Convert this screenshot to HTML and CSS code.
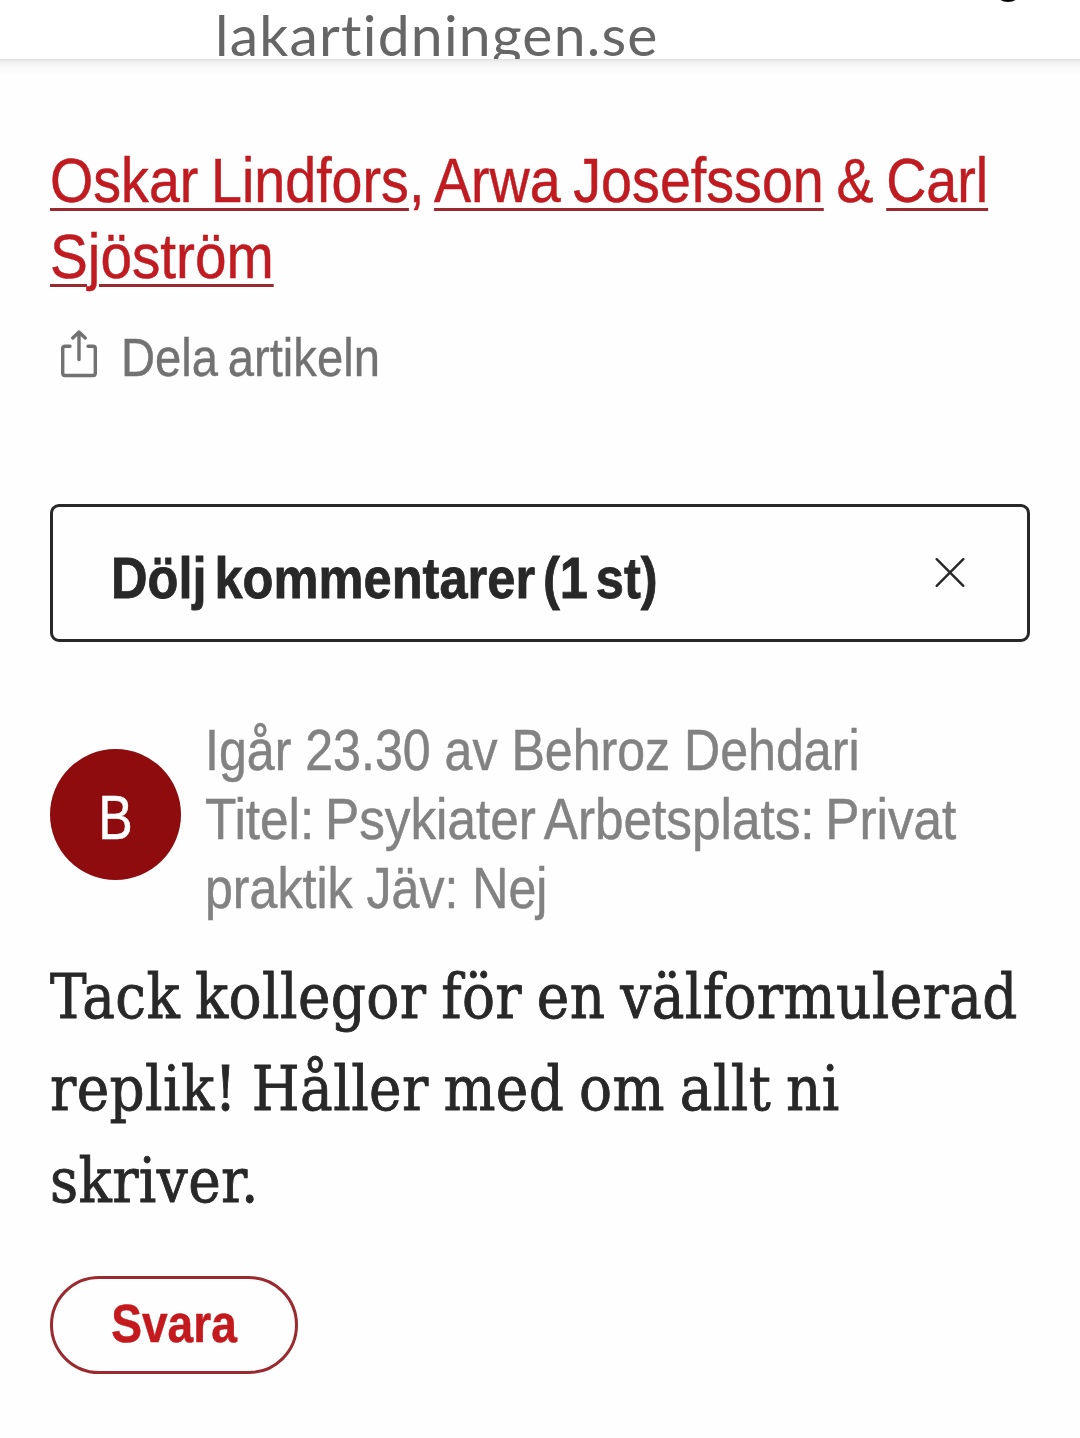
FILE: index.html
```html
<!DOCTYPE html>
<html lang="sv">
<head>
<meta charset="utf-8">
<title>Läkartidningen</title>
<link rel="stylesheet" href="styles.css">
</head>
<body>
<header class="browser-bar">
  <span class="address">lakartidningen.se</span>
  <span class="bar-dot"></span>
</header>
<main class="page">
  <p class="authors">
    <span class="narrow authors-first"><a>Oskar Lindfors</a>, <a>Arwa Josefsson</a> &amp; <a>Carl</a></span>
    <span class="narrow authors-second"><a>Sjöström</a></span>
  </p>
  <div class="share">
    <svg class="share-icon" width="36" height="48" viewBox="0 0 36 48" fill="none" stroke="#727272" stroke-width="3.4" stroke-linecap="round" stroke-linejoin="round">
      <path d="M9 16.2H4Q1.7 16.2 1.7 18.5V43Q1.7 45.5 4 45.5H32Q34.3 45.5 34.3 43V18.5Q34.3 16.2 32 16.2H27M18 29.5V2.2M11.8 8L18 2L24.2 8"/>
    </svg>
    <span class="narrow share-label">Dela artikeln</span>
  </div>
  <button class="toggle">
    <span class="narrow toggle-label">Dölj kommentarer (1 st)</span>
    <svg width="30" height="30" viewBox="0 0 30 30" fill="none" stroke="#282828" stroke-width="2.4" stroke-linecap="round"><path d="M1.7 1.2L28.3 27.8M28.3 1.2L1.7 27.8"/></svg>
  </button>
  <article class="comment">
    <div class="comment-head">
      <div class="avatar"><span class="initial">B</span></div>
      <p class="meta">
        <span class="narrow">Igår 23.30 av Behroz Dehdari</span>
        <span class="narrow meta-role">Titel: Psykiater Arbetsplats: Privat</span>
        <span class="narrow">praktik Jäv: Nej</span>
      </p>
    </div>
    <p class="comment-text">Tack kollegor för en välformulerad<br>replik! Håller med om allt ni<br>skriver.</p>
    <button class="reply"><span class="reply-label">Svara</span></button>
  </article>
</main>
</body>
</html>
```
FILE: styles.css
```css
* { box-sizing: border-box; }
html { background: #fefefe; }
body {
  margin: 0;
  height: 1438px;
  overflow: hidden;
  background: #fefefe;
  color: #282828;
  font-family: "Liberation Sans", Arial, sans-serif;
  white-space: nowrap;
}
p { margin: 0; }
button { font: inherit; background: none; }

/* Condensed look for the grotesque text */
.narrow {
  display: block;
  width: max-content;
  transform: scaleX(.879);
  transform-origin: left;
}

.browser-bar {
  position: relative;
  height: 59px;
  padding-left: 215px;
  overflow: hidden;
  background: #fff;
}
.address {
  display: block;
  height: 59px;
  font: 57px/69px Lato, sans-serif;
  letter-spacing: 1.25px;
  color: #666;
}
.bar-dot {
  position: absolute;
  left: 993px;
  top: -28px;
  width: 30px;
  height: 30px;
  border-radius: 50%;
  background: #000;
}
.page {
  padding: 83px 50px 0;
  background: linear-gradient(#e0e0e0, #f1f1f1 3px, #fafafa 9px, #fefefe 17px);
}
.authors {
  font-size: 63px;
  line-height: 76px;
  color: #bf1b20;
  -webkit-text-stroke: .5px;
}
.authors-first {
  transform: scaleX(.883);
  word-spacing: -3.2px;
}
.authors-second { transform: scaleX(.9); }
.authors a {
  text-decoration: underline;
  text-decoration-color: #9a2a2f;
  text-decoration-thickness: 3px;
  text-underline-offset: 6px;
}
.share {
  display: flex;
  align-items: center;
  height: 66px;
  margin-top: 30px;
  padding-left: 11px;
  color: #727272;
}
.share-icon { margin-top: -6px; }
.share-label {
  margin: 2px 0 0 24px;
  font-size: 53px;
  line-height: 66px;
  word-spacing: -4px;
  transform: scaleX(.891);
  -webkit-text-stroke: .4px;
}
.toggle {
  display: flex;
  align-items: center;
  justify-content: space-between;
  width: 980px;
  height: 138px;
  margin-top: 114px;
  padding: 0 62px 0 58px;
  border: 3px solid #282828;
  border-radius: 9px;
  color: #282828;
}
.toggle-label {
  padding-top: 10px;
  font-size: 57px;
  font-weight: 700;
  word-spacing: -7px;
  transform: scaleX(.888);
  -webkit-text-stroke: .8px;
}
.comment-head {
  display: flex;
  align-items: flex-start;
  gap: 24px;
  height: 207px;
  margin-top: 74px;
}
.avatar {
  flex: none;
  width: 131px;
  height: 131px;
  margin-top: 33px;
  border-radius: 50%;
  background: #8e0b0e;
  color: #fff;
  font-size: 63px;
  line-height: 137px;
  text-align: center;
}
.initial {
  display: block;
  transform: scaleX(.82);
  -webkit-text-stroke: .5px;
}
.meta {
  font-size: 57px;
  line-height: 69px;
  color: #828282;
  -webkit-text-stroke: .5px;
}
.meta-role {
  word-spacing: -4px;
  transform: scaleX(.9);
}
.comment-text {
  margin-top: 28px;
  font-family: "DejaVu Serif Condensed", "DejaVu Serif", serif;
  font-size: 61px;
  line-height: 92px;
  letter-spacing: .4px;
  word-spacing: -3px;
  -webkit-text-stroke: .8px;
}
.reply {
  display: block;
  width: 248px;
  height: 98px;
  margin-top: 49px;
  padding: 0 0 4px;
  border: 3px solid #9a2a2f;
  border-radius: 49px;
  color: #c4191d;
  font-size: 53px;
  font-weight: 700;
}
.reply-label {
  display: block;
  transform: scaleX(.87);
  -webkit-text-stroke: .5px;
}
```
